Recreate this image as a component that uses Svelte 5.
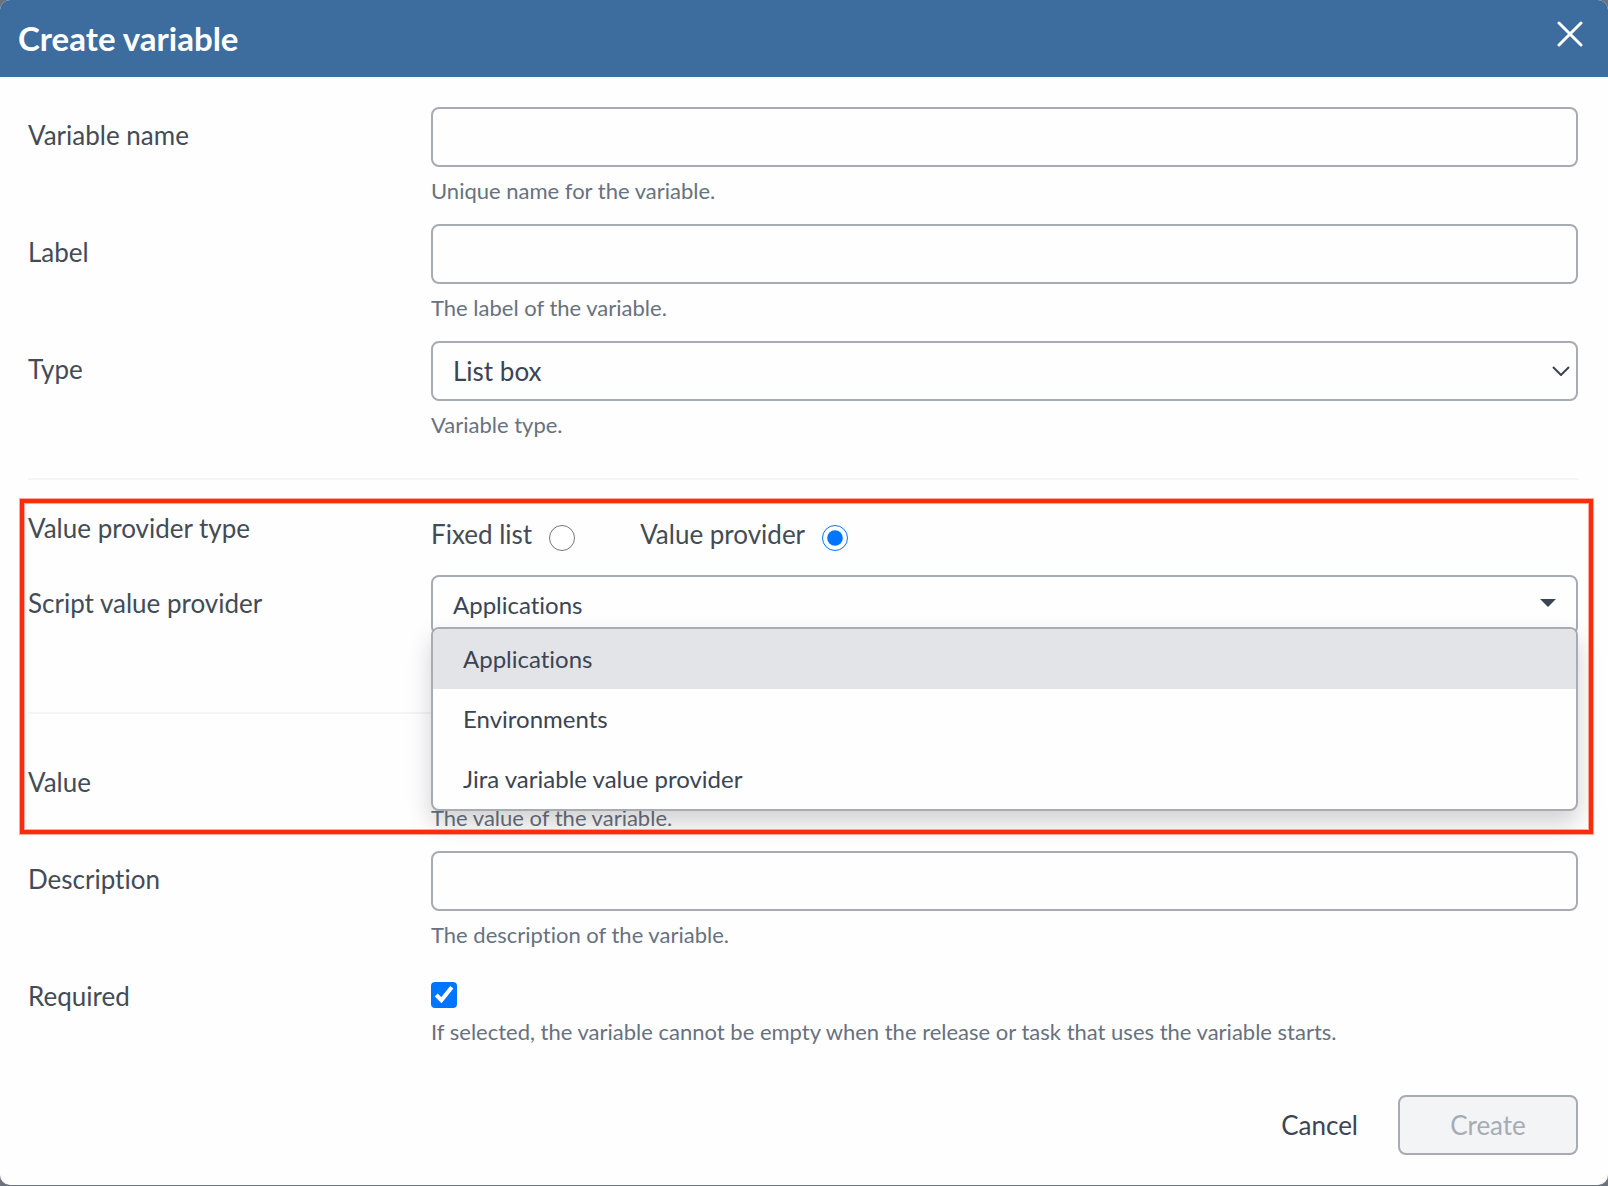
<script>
  let name = $state('');
  let label = $state('');
  let type = $state('List box');
  let providerKind = $state('provider');
  let value = $state('');
  let description = $state('');
  let required = $state(true);

  const providers = ['Applications', 'Environments', 'Jira variable value provider'];
  let provider = $state('Applications');
  let open = $state(true);

  function choose(option) {
    provider = option;
    open = false;
  }
</script>

<div class="dialog" role="dialog" aria-labelledby="dialog-title">
  <header>
    <h1 id="dialog-title">Create variable</h1>
    <button class="close" type="button" aria-label="Close">
      <svg viewBox="0 0 26 26" width="26" height="26" aria-hidden="true">
        <path d="M2 2 24 24M24 2 2 24" fill="none" stroke="currentColor" stroke-width="3" stroke-linecap="round" />
      </svg>
    </button>
  </header>

  <form onsubmit={(e) => e.preventDefault()}>
    <div class="row">
      <label class="caption" for="name">Variable name</label>
      <div>
        <input class="field" id="name" type="text" bind:value={name} />
        <p class="hint">Unique name for the variable.</p>
      </div>
    </div>

    <div class="row">
      <label class="caption" for="label">Label</label>
      <div>
        <input class="field" id="label" type="text" bind:value={label} />
        <p class="hint">The label of the variable.</p>
      </div>
    </div>

    <div class="row">
      <label class="caption" for="type">Type</label>
      <div>
        <div class="picker">
          <select class="field" id="type" bind:value={type}>
            <option>List box</option>
            <option>Text</option>
            <option>Password</option>
          </select>
          <svg class="chevron" viewBox="0 0 18 10" width="18" height="10" aria-hidden="true">
            <path d="M1 1 9 9 17 1" fill="none" stroke="currentColor" stroke-width="2" />
          </svg>
        </div>
        <p class="hint">Variable type.</p>
      </div>
    </div>

    <hr />

    <section class="highlight">
      <div class="row choice-row" role="radiogroup" aria-labelledby="kind">
        <span class="caption" id="kind">Value provider type</span>
        <div class="choices">
          <label class="choice">
            Fixed list
            <input type="radio" name="kind" value="fixed" bind:group={providerKind} />
          </label>
          <label class="choice">
            Value provider
            <input type="radio" name="kind" value="provider" bind:group={providerKind} />
          </label>
        </div>
      </div>

      <div class="row provider-row">
        <label class="caption" for="provider">Script value provider</label>
        <div class="picker">
          <button
            class="field combo"
            id="provider"
            type="button"
            aria-haspopup="listbox"
            aria-expanded={open}
            onclick={() => (open = !open)}
          >
            <span>{provider}</span>
            <svg viewBox="0 0 16 8" width="16" height="8" aria-hidden="true">
              <path d="M0 0H16L8 8Z" fill="currentColor" />
            </svg>
          </button>
          {#if open}
            <div class="menu" role="listbox" aria-label="Script value provider">
              {#each providers as option}
                <button
                  type="button"
                  role="option"
                  class:active={option === provider}
                  aria-selected={option === provider}
                  onclick={() => choose(option)}>{option}</button
                >
              {/each}
            </div>
          {/if}
        </div>
      </div>

      <hr />

      <div class="row value-row">
        <label class="caption" for="value">Value</label>
        <div>
          <input class="plain" id="value" type="text" bind:value />
          <p class="hint">The value of the variable.</p>
        </div>
      </div>
    </section>

    <div class="row">
      <label class="caption" for="description">Description</label>
      <div>
        <input class="field" id="description" type="text" bind:value={description} />
        <p class="hint">The description of the variable.</p>
      </div>
    </div>

    <div class="row">
      <label class="caption" for="required">Required</label>
      <div>
        <div class="check">
          <input id="required" type="checkbox" bind:checked={required} />
        </div>
        <p class="hint">If selected, the variable cannot be empty when the release or task that uses the variable starts.</p>
      </div>
    </div>

    <footer>
      <button class="cancel" type="button">Cancel</button>
      <button class="create" type="submit" disabled>Create</button>
    </footer>
  </form>
</div>

<style>
  :global(body) {
    margin: 0;
    background: #6c737d;
  }

  .dialog,
  .dialog * {
    box-sizing: border-box;
  }

  .dialog {
    margin-bottom: 1px;
    overflow: hidden;
    border-radius: 10px;
    background: #fefefe;
    color: #444b55;
    font: 26px/36px Lato, 'Liberation Sans', sans-serif;
    font-variant-ligatures: none;
  }

  input,
  select,
  button {
    margin: 0;
    color: #3b4453;
    font: inherit;
    font-variant-ligatures: none;
  }

  header {
    display: flex;
    align-items: flex-start;
    justify-content: space-between;
    padding: 18px 25px 19px 18px;
    background: #3d6c9e;
    color: #fff;
  }

  h1 {
    margin: 0;
    font-size: 33px;
    font-weight: 700;
    line-height: 40px;
  }

  .close {
    display: flex;
    padding: 3px 0;
    border: 0;
    background: none;
    color: #fff;
    cursor: pointer;
  }

  form {
    padding: 30px 30px 30px 28px;
  }

  .row {
    display: grid;
    grid-template-columns: 26% minmax(0, 1fr);
    align-items: start;
    padding-bottom: 17px;
  }

  .caption {
    padding-top: 10px;
  }

  .field {
    display: block;
    width: 100%;
    height: 60px;
    padding: 0 20px;
    border: 2px solid #a7abb2;
    border-radius: 8px;
    background: #fefefe;
  }

  select {
    appearance: none;
  }

  .hint {
    margin: 8px 0 0;
    color: #68717e;
    font-size: 22px;
    line-height: 32px;
  }

  hr {
    height: 2px;
    margin: 20px 0;
    border: 0;
    background: #f3f4f5;
  }

  .picker {
    position: relative;
  }

  .chevron {
    position: absolute;
    top: 25px;
    right: 8px;
    color: #3b4453;
    pointer-events: none;
  }

  /* Red frame drawn over the whole value provider group */
  .highlight {
    position: relative;
  }

  .highlight::after {
    content: '';
    position: absolute;
    inset: -1px -15px 17px -8px;
    z-index: 2;
    border: 4px solid #f92d0c;
    box-shadow:
      0 0 0 1px rgba(249, 45, 12, 0.4),
      inset 0 0 0 1px rgba(249, 45, 12, 0.4);
    pointer-events: none;
  }

  .choice-row {
    padding-bottom: 19px;
  }

  .choices {
    display: flex;
    gap: 65px;
    height: 56px;
    padding-top: 16px;
  }

  .choice {
    display: flex;
    align-items: flex-start;
    gap: 17px;
  }

  input[type='radio'],
  input[type='checkbox'] {
    width: 26px;
    height: 26px;
    accent-color: #0075ff;
  }

  input[type='radio'] {
    margin-top: 9px;
  }

  input[type='checkbox'] {
    clip-path: inset(0 round 4px);
  }

  .provider-row {
    padding-bottom: 57px;
  }

  .combo {
    display: flex;
    align-items: center;
    justify-content: space-between;
    font-size: 24px;
    text-align: left;
  }

  .combo svg {
    margin-bottom: 4px;
  }

  .menu {
    position: absolute;
    top: 52px;
    left: 0;
    right: 0;
    z-index: 1;
    overflow: hidden;
    border: 2px solid #a7abb2;
    border-radius: 8px;
    background: #fefefe;
    box-shadow: 0 12px 24px rgba(0, 0, 0, 0.18);
  }

  .menu button {
    display: block;
    width: 100%;
    height: 60px;
    padding: 0 30px;
    border: 0;
    background: none;
    font-size: 24px;
    text-align: left;
  }

  .menu .active {
    background: #e3e4e8;
  }

  .value-row {
    padding-top: 20px;
  }

  .plain {
    display: block;
    width: 100%;
    height: 40px;
    padding: 0 20px;
    border: 0;
    background: none;
  }

  .check {
    display: flex;
    height: 40px;
    padding-top: 14px;
  }

  footer {
    display: flex;
    justify-content: flex-end;
    gap: 20px;
    padding-top: 30px;
  }

  footer button {
    height: 60px;
    border: 2px solid transparent;
    border-radius: 8px;
    background: none;
  }

  .cancel {
    padding: 0 18px;
  }

  .create {
    min-width: 180px;
    border-color: #a7abb2;
    background: #f3f4f6;
    color: #a7abb2;
  }
</style>
